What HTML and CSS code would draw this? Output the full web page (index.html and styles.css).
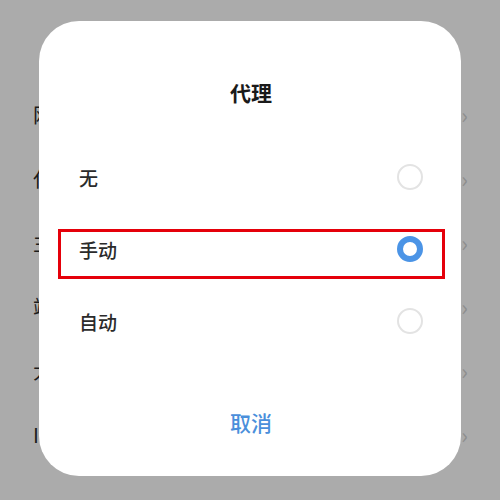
FILE: index.html
```html
<!DOCTYPE html>
<html lang="zh-CN">
<head>
    <meta charset="UTF-8">
    <meta name="viewport" content="width=device-width, initial-scale=1.0">
    <title>代理</title>
    <link rel="stylesheet" href="styles.css">
</head>
<body>
    <div class="page">
        <ul class="settings">
            <li class="setting"><span>网</span><span class="chevron">›</span></li>
            <li class="setting"><span>代</span><span class="chevron">›</span></li>
            <li class="setting"><span>主</span><span class="chevron">›</span></li>
            <li class="setting"><span>端</span><span class="chevron">›</span></li>
            <li class="setting"><span>大</span><span class="chevron">›</span></li>
            <li class="setting"><span>I</span><span class="chevron">›</span></li>
        </ul>

        <div class="dialog">
            <h1 class="dialog-title">代理</h1>

            <div class="options">
                <div class="option">
                    <span>无</span>
                    <span class="radio"></span>
                </div>
                <div class="option">
                    <span>手动</span>
                    <span class="radio checked"></span>
                </div>
                <div class="option">
                    <span>自动</span>
                    <span class="radio"></span>
                </div>
            </div>

            <div class="cancel">取消</div>

            <div class="highlight"></div>
        </div>
    </div>
</body>
</html>
```

FILE: styles.css
```css
* {
    box-sizing: border-box;
}
body {
    margin: 0;
    font-family: "Noto Sans CJK SC", "Noto Sans", sans-serif;
    background-color: #ababab;
}
.page {
    position: relative;
    width: 500px;
    height: 500px;
    overflow: hidden;
}
.settings {
    list-style: none;
    margin: 0;
    padding: 82px 0 0 0;
}
.setting {
    display: flex;
    justify-content: space-between;
    align-items: center;
    height: 64px;
    padding: 0 32px 0 33px;
    font-size: 20px;
    color: #1c1c1c;
}
.chevron {
    color: #8e8e8e;
    font-size: 22px;
}
.dialog {
    position: absolute;
    left: 39px;
    top: 21px;
    width: 422px;
    height: 455px;
    background-color: white;
    border-radius: 40px;
    padding: 56px 38px 0 40px;
}
.dialog-title {
    margin: 0;
    text-align: center;
    font-size: 21px;
    line-height: 30px;
    font-weight: bold;
    color: #1a1a1a;
}
.options {
    margin-top: 34px;
}
.option {
    display: flex;
    justify-content: space-between;
    align-items: center;
    height: 72px;
    font-size: 19px;
    font-weight: 500;
    color: #2b2b2b;
}
.radio {
    width: 26px;
    height: 26px;
    border-radius: 50%;
    border: 2px solid #e3e3e3;
}
.radio.checked {
    border: 6px solid #4b94e6;
}
.cancel {
    margin-top: 50px;
    text-align: center;
    font-size: 21px;
    line-height: 30px;
    font-weight: 500;
    color: #4a8fdb;
}
.highlight {
    position: absolute;
    left: 19px;
    top: 208px;
    width: 387px;
    height: 50px;
    border: 3px solid #e5000a;
}
```
